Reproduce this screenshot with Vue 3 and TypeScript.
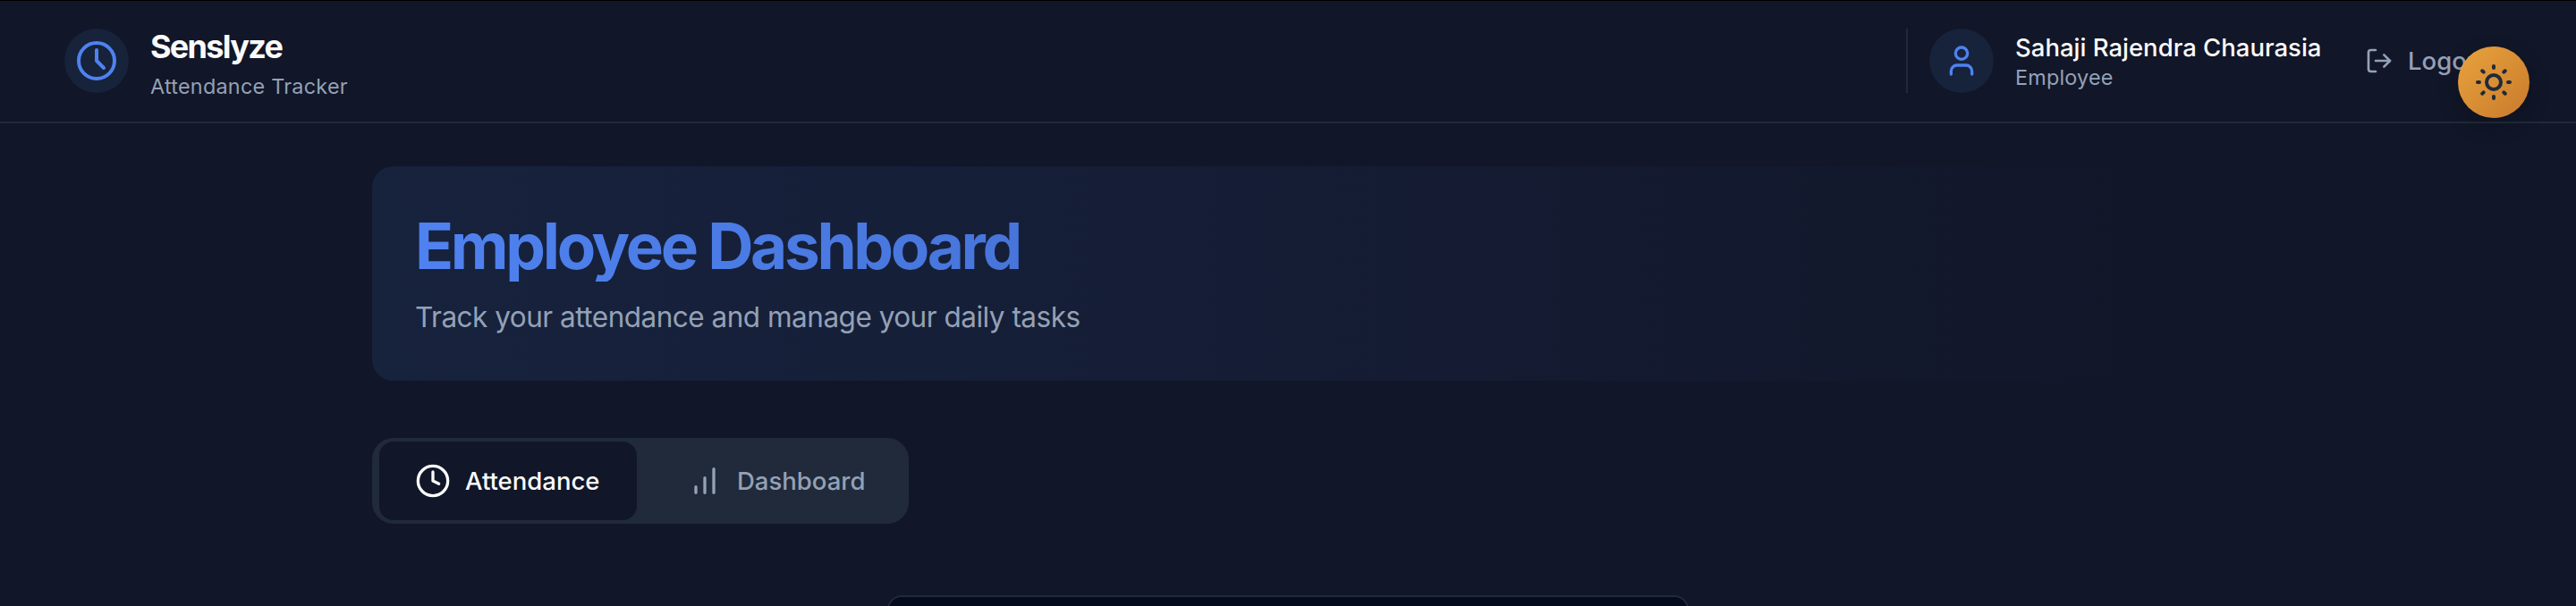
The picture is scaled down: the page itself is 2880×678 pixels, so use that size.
<script setup lang="ts">
import { ref } from 'vue'

type TabId = 'attendance' | 'dashboard'

const tabs: { id: TabId; label: string }[] = [
  { id: 'attendance', label: 'Attendance' },
  { id: 'dashboard', label: 'Dashboard' },
]
const active = ref<TabId>('attendance')
</script>

<template>
  <div class="page">
    <header class="header">
      <div class="brand">
        <span class="disc">
          <svg class="icon-48" viewBox="0 0 24 24">
            <circle cx="12" cy="12" r="10" />
            <path d="M12 6v6l4 4" />
          </svg>
        </span>
        <div class="brand-text">
          <span class="brand-name">Senslyze</span>
          <span class="brand-sub">Attendance Tracker</span>
        </div>
      </div>
      <div class="account">
        <div class="user">
          <span class="disc">
            <svg class="icon-40" viewBox="0 0 24 24">
              <path d="M19 21v-2a4 4 0 0 0-4-4H9a4 4 0 0 0-4 4v2" />
              <circle cx="12" cy="7" r="4" />
            </svg>
          </span>
          <div class="user-text">
            <span class="user-name">Sahaji Rajendra Chaurasia</span>
            <span class="user-role">Employee</span>
          </div>
        </div>
        <button class="logout" type="button">
          <svg class="icon-32" viewBox="0 0 24 24">
            <path d="M9 21H5a2 2 0 0 1-2-2V5a2 2 0 0 1 2-2h4" />
            <path d="M16 17l5-5-5-5" />
            <path d="M21 12H9" />
          </svg>
          <span>Logout</span>
        </button>
      </div>
    </header>

    <button class="theme" type="button" aria-label="Toggle theme">
      <svg class="icon-48" viewBox="0 0 24 24">
        <path
          d="M12 3v1m0 16v1m9-9h-1M4 12H3m15.364 6.364l-.707-.707M6.343 6.343l-.707-.707m12.728 0l-.707.707M6.343 17.657l-.707.707M16 12a4 4 0 11-8 0 4 4 0 018 0z"
        />
      </svg>
    </button>

    <main class="main">
      <section class="banner">
        <h1 class="title">Employee Dashboard</h1>
        <p class="subtitle">Track your attendance and manage your daily tasks</p>
      </section>

      <nav class="tabs">
        <button
          v-for="tab in tabs"
          :key="tab.id"
          type="button"
          class="tab"
          :class="[tab.id, { active: tab.id === active }]"
          @click="active = tab.id"
        >
          <svg v-if="tab.id === 'attendance'" class="icon-40" viewBox="0 0 24 24">
            <circle cx="12" cy="12" r="10" />
            <path d="M12 6v6l4 2" />
          </svg>
          <svg v-else class="icon-40" viewBox="0 0 24 24">
            <path d="M12 20V10M18 20V4M6 20v-4" />
          </svg>
          <span>{{ tab.label }}</span>
        </button>
      </nav>

      <section class="card"></section>
    </main>
  </div>
</template>

<style>
html,
body {
  margin: 0;
  background: #111628;
}
</style>

<style scoped>
.page {
  position: relative;
  box-sizing: border-box;
  height: 678px;
  overflow: hidden;
  background: #111628;
  color: #fafafa;
  font-family: Inter, 'Liberation Sans', sans-serif;
}
svg {
  display: block;
  flex: none;
  fill: none;
  stroke: currentColor;
  stroke-width: 2;
  stroke-linecap: round;
  stroke-linejoin: round;
}
.icon-48 {
  width: 48px;
  height: 48px;
}
.icon-40 {
  width: 40px;
  height: 40px;
}
.icon-32 {
  width: 32px;
  height: 32px;
}
button {
  margin: 0;
  padding: 0;
  border: 0;
  background: none;
  font: inherit;
  color: inherit;
}
.header {
  box-sizing: border-box;
  height: 138px;
  padding: 31px 72px 32px;
  border-top: 1px solid #000;
  border-bottom: 2px solid #202a3a;
  display: flex;
  justify-content: space-between;
}
.disc {
  flex: none;
  width: 72px;
  height: 72px;
  border-radius: 50%;
  background: #17223b;
  color: #4f82f0;
  display: flex;
  align-items: center;
  justify-content: center;
}
.brand {
  display: flex;
  height: 72px;
  align-items: center;
  gap: 24px;
}
.brand-text,
.user-text {
  display: flex;
  flex-direction: column;
  white-space: nowrap;
}
.brand-text {
  padding-top: 1px;
}
.user-text {
  width: 343px;
  padding-top: 2px;
}
.brand-name {
  font-size: 36px;
  line-height: 55px;
  font-weight: 700;
  letter-spacing: -1.7px;
}
.brand-sub {
  font-size: 23.4px;
  line-height: 33px;
  letter-spacing: 0.25px;
  color: #94a1b6;
}
.account {
  display: flex;
  height: 72px;
  align-items: center;
}
.user {
  display: flex;
  align-items: center;
  gap: 24px;
  padding-left: 24px;
  border-left: 2px solid #202a3a;
}
.user-name {
  font-size: 27.5px;
  line-height: 36px;
  font-weight: 550;
}
.user-role {
  font-size: 23.4px;
  line-height: 32px;
  letter-spacing: 0.2px;
  color: #94a1b6;
}
.logout {
  display: flex;
  align-items: center;
  gap: 16px;
  width: 164px;
  margin-left: 48px;
  font-size: 27.5px;
  font-weight: 550;
  color: #94a1b6;
}
.theme {
  position: absolute;
  top: 52px;
  right: 52px;
  width: 80px;
  height: 80px;
  border-radius: 50%;
  background: linear-gradient(135deg, #e8a33d, #c97a2c);
  box-shadow: 0 8px 24px rgba(0, 0, 0, 0.18);
  color: #202a3a;
  display: flex;
  align-items: center;
  justify-content: center;
}
.main {
  width: 2048px;
  margin: 0 auto;
  padding-top: 48px;
  display: flex;
  flex-direction: column;
}
.banner {
  box-sizing: border-box;
  height: 240px;
  padding: 49px 48px 47px;
  border-radius: 24px;
  background: linear-gradient(90deg, #17223d, #151d35 50%, #111628);
}
.title {
  margin: 0;
  width: max-content;
  font-size: 71px;
  line-height: 80px;
  font-weight: 700;
  letter-spacing: -3.32px;
  color: transparent;
  background: linear-gradient(90deg, #4f82f0, #4775da);
  background-clip: text;
  -webkit-background-clip: text;
}
.subtitle {
  margin: 16px 0 0;
  font-size: 31.5px;
  line-height: 48px;
  letter-spacing: -0.5px;
  color: #94a1b6;
}
.tabs {
  box-sizing: border-box;
  width: 600px;
  height: 96px;
  margin-top: 64px;
  padding: 4px 8px;
  border-radius: 24px;
  background: #202a3a;
  display: flex;
}
.tab {
  box-sizing: border-box;
  height: 88px;
  padding-left: 40px;
  border-radius: 16px;
  display: flex;
  align-items: center;
  gap: 16px;
  font-size: 27.5px;
  font-weight: 550;
  color: #94a1b6;
}
.tab.attendance {
  width: 288px;
}
.tab.dashboard {
  width: 296px;
  padding-left: 56px;
}
.tab.active {
  background: #111628;
  color: #fafafa;
}
.card {
  box-sizing: border-box;
  flex: none;
  width: 896px;
  height: 400px;
  margin: 80px auto 0;
  border: 2px solid #202a3a;
  border-radius: 16px;
  background: #040b1d;
}
</style>
